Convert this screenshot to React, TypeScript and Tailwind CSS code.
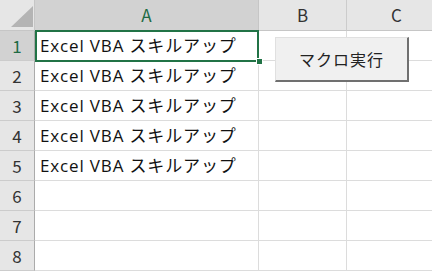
import React from "react";

const font = { fontFamily: '"Noto Sans CJK JP", "Noto Sans", sans-serif' };
const cellFont = { fontFamily: '"Open Sans", "Noto Sans CJK JP", sans-serif' };

export default function App() {
  const rows = [1, 2, 3, 4, 5, 6, 7, 8];
  const text = "Excel VBA スキルアップ";
  return (
    <div className="relative w-[432px] h-[274px] overflow-hidden bg-white" style={font}>
      <div className="grid grid-cols-[35px_224px_88px_100px] grid-rows-[31px_repeat(9,30px)]">
        {/* header row */}
        <div className="relative bg-[#e6e6e6] border-r border-b border-[#c6c6c6]">
          <svg className="absolute left-0 top-0" width="35" height="31">
            <polygon points="11,27 33,27 33,6" fill="#b4b4b4" />
          </svg>
        </div>
        <div className="bg-[#d2d2d2] border-r border-b border-[#c6c6c6] flex items-center justify-center text-[17px] text-[#1e6b44]">A</div>
        <div className="bg-[#e6e6e6] border-r border-b border-[#cccccc] border-b-[#c6c6c6] flex items-center justify-center text-[17px] text-[#333]">B</div>
        <div className="bg-[#e6e6e6] border-r border-b border-[#cccccc] border-b-[#c6c6c6] flex items-center justify-center text-[17px] text-[#333]">C</div>
        {rows.map((r) => (
          <React.Fragment key={r}>
            <div
              className={
                r === 1
                  ? "bg-[#d2d2d2] border-r border-b border-r-[#ababab] border-b-[#cccccc] flex items-center justify-center text-[17px] text-[#1e6b44]"
                  : "bg-[#e6e6e6] border-r border-b border-r-[#ababab] border-b-[#cccccc] flex items-center justify-center text-[17px] text-[#333]"
              }
            >
              {r}
            </div>
            <div
              className="border-r border-b border-[#dcdcdc] flex items-center pl-[5px] text-[17px] tracking-[0.85px] text-[#111] whitespace-nowrap"
              style={cellFont}
            >
              {r <= 5 ? text : ""}
            </div>
            <div className="border-r border-b border-[#dcdcdc]"></div>
            <div className="border-r border-b border-[#dcdcdc]"></div>
          </React.Fragment>
        ))}
      </div>
      {/* selection */}
      <div className="absolute left-[35px] top-[30px] w-[224px] h-[32px] border-2 border-[#217346] pointer-events-none"></div>
      <div className="absolute left-[256px] top-[58px] w-[7px] h-[7px] bg-[#217346] border border-white"></div>
      {/* button */}
      <div className="absolute left-[275px] top-[37px] w-[134px] h-[45px] bg-[#f0f0f0] border-t border-l border-t-[#e0e0e0] border-l-[#e0e0e0] border-r-2 border-b-2 border-r-[#707070] border-b-[#707070] flex items-center justify-center text-[16px] text-[#222] tracking-[1px]">
        マクロ実行
      </div>
    </div>
  );
}
